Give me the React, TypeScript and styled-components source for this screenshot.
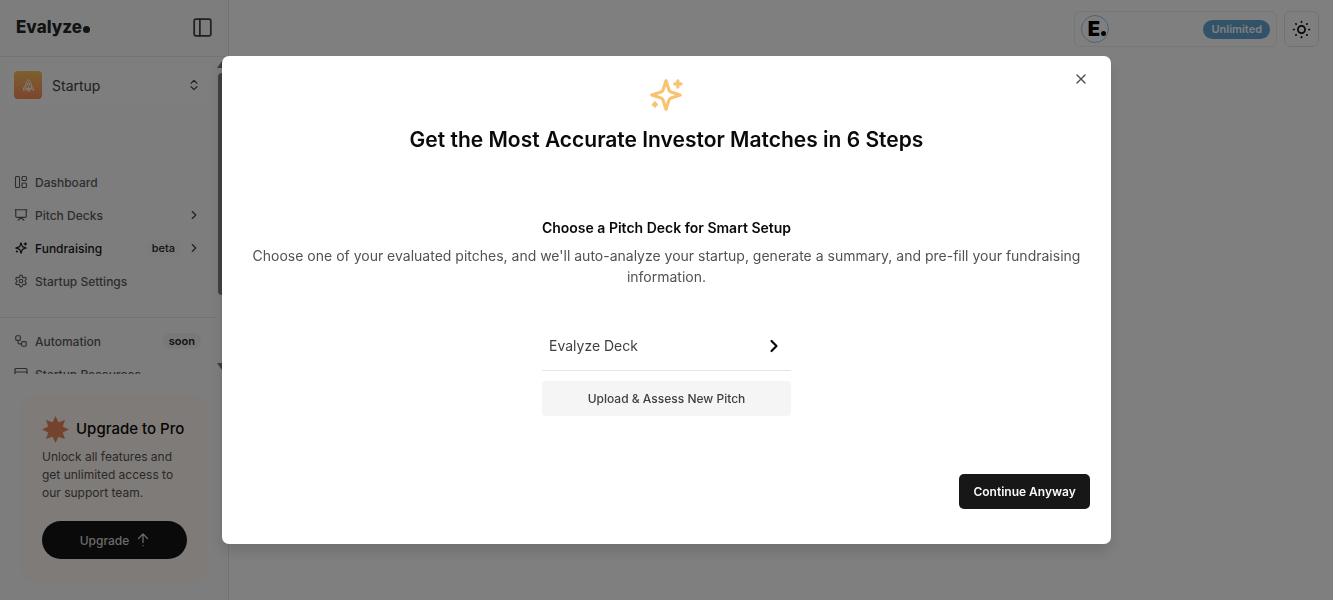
import React from "react";
import styled, { createGlobalStyle, css } from "styled-components";
import {
  ChevronRight,
  ChevronsUpDown,
  Presentation,
  Settings,
  Workflow,
  X,
} from "lucide-react";

const GlobalStyle = createGlobalStyle`
  *, *::before, *::after { box-sizing: border-box; }
  body {
    margin: 0;
    background: #ffffff;
    color: #0a0a0a;
    font-family: Inter, "Liberation Sans", sans-serif;
    font-size: 12px;
  }
  button { font: inherit; color: inherit; border: 0; background: none; padding: 0; cursor: pointer; }
  a { color: inherit; text-decoration: none; }
  h1, h2, h3, p, ul { margin: 0; padding: 0; }
  ul { list-style: none; }
  svg { flex: none; }
`;

const Shell = styled.div`
  display: flex;
  height: 100vh;
  overflow: hidden;
`;

const Sidebar = styled.aside`
  display: flex;
  flex-direction: column;
  flex: none;
  width: 229px;
  background: #fafafa;
  border-right: 1px solid #e5e5e5;
`;

const SidebarHeader = styled.header`
  display: flex;
  align-items: center;
  justify-content: space-between;
  flex: none;
  height: 57px;
  padding: 0 15px 2px 16px;
  border-bottom: 1px solid #e9e9e9;
`;

const Logo = styled.a`
  display: flex;
  align-items: baseline;
  gap: 1px;
  font-size: 17px;
  line-height: 24px;
  font-weight: 800;
  color: #262626;
`;

const LogoDot = styled.span`
  width: 7px;
  height: 7px;
  border-radius: 50%;
  background: #262626;
`;

const IconButton = styled.button`
  display: flex;
  color: #404040;
`;

const ScrollArea = styled.div`
  display: flex;
  flex: 1;
  min-height: 0;
  overflow: hidden;
`;

const ScrollContent = styled.div`
  flex: 1;
  min-width: 0;
`;

const ScrollTrack = styled.div`
  display: flex;
  flex-direction: column;
  align-items: center;
  flex: none;
  width: 12px;
  padding: 4px 0;
`;

const ScrollArrow = styled.span<{ $down?: boolean }>`
  border: 5px solid transparent;
  ${(p) =>
    p.$down
      ? css`
          border-top: 7px solid #7a7a7a;
          border-bottom: 0;
          margin-top: auto;
        `
      : css`
          border-bottom: 7px solid #7a7a7a;
          border-top: 0;
        `}
`;

const ScrollThumb = styled.span`
  width: 9px;
  height: 72%;
  margin-top: 5px;
  border-radius: 4px;
  background: #808080;
`;

const Switcher = styled.button`
  display: flex;
  align-items: center;
  gap: 10px;
  width: calc(100% - 14px);
  height: 42px;
  margin: 7px 0 60px 7px;
  padding: 0 8px 0 7px;
  border-radius: 6px;
  background: #fdfdfd;
  font-size: 14px;
  color: #404040;
  text-align: left;
  > svg { margin-left: auto; }
`;

const SwitcherIcon = styled.span`
  display: flex;
  align-items: center;
  justify-content: center;
  width: 28px;
  height: 28px;
  border-radius: 4px;
  color: #ffffff;
  background: linear-gradient(#fdc05a, #fb8a5c);
`;

const NavList = styled.ul`
  & + & {
    width: 215px;
    margin-top: 19px;
    padding-top: 7px;
    border-top: 1px solid #e5e5e5;
  }
`;

const NavLink = styled.a<{ $active?: boolean }>`
  display: flex;
  align-items: center;
  gap: 7px;
  width: 215px;
  height: 33px;
  padding: 0 14px 1px;
  font-size: 12px;
  font-weight: 500;
  color: ${(p) => (p.$active ? "#171717" : "#5c5c5c")};
  white-space: nowrap;
`;

const NavEnd = styled.span`
  display: flex;
  align-items: center;
  gap: 6px;
  margin-left: auto;
  color: #404040;
`;

const Tag = styled.span<{ $filled?: boolean }>`
  padding: 0 6px;
  border-radius: 8px;
  background: ${(p) => (p.$filled ? "#f0f0f0" : "#f7f7f7")};
  font-size: 11px;
  line-height: 16px;
  font-weight: ${(p) => (p.$filled ? 600 : 500)};
  color: #262626;
`;

const SidebarFooter = styled.div`
  flex: none;
  padding: 21px 20px 18px;
`;

const UpgradeCard = styled.section`
  padding: 22px 21px 23px 22px;
  border-radius: 14px;
  background: #fff6f0;
`;

const UpgradeTitle = styled.h2`
  display: flex;
  align-items: center;
  gap: 7px;
  margin-bottom: 7px;
  font-size: 15px;
  line-height: 24px;
  font-weight: 500;
  color: #0a0a0a;
  white-space: nowrap;
  svg { margin: -2px 0; }
`;

const UpgradeText = styled.p`
  font-size: 12px;
  line-height: 18px;
  color: #525252;
`;

const UpgradeButton = styled.button`
  display: flex;
  align-items: center;
  justify-content: center;
  gap: 8px;
  width: 100%;
  height: 38px;
  margin-top: 19px;
  border-radius: 19px;
  background: #141414;
  font-weight: 500;
  color: #d4d4d4;
`;

const Main = styled.main`
  flex: 1;
  min-width: 0;
`;

const Topbar = styled.header`
  display: flex;
  justify-content: flex-end;
  gap: 7px;
  padding: 11px 14px;
`;

const Account = styled.button`
  display: flex;
  align-items: center;
  justify-content: space-between;
  width: 203px;
  height: 36px;
  padding: 0 6px;
  border: 1px solid #ededed;
  border-radius: 6px;
`;

const Avatar = styled.span`
  display: flex;
  align-items: center;
  justify-content: center;
  width: 28px;
  height: 28px;
  border: 1px solid #9cc6e8;
  border-radius: 50%;
`;

const AvatarMark = styled.span`
  display: flex;
  align-items: baseline;
  gap: 1px;
  padding-left: 4px;
  font-size: 20px;
  line-height: 24px;
  font-weight: 900;
  color: #000000;
  &::after {
    content: "";
    width: 5px;
    height: 5px;
    border-radius: 50%;
    background: #000000;
  }
`;

const PlanBadge = styled.span`
  padding: 0 8px;
  border-radius: 10px;
  background: #62a4d0;
  font-size: 11px;
  line-height: 19px;
  font-weight: 600;
  color: #ffffff;
`;

const ThemeButton = styled.button`
  display: flex;
  align-items: center;
  justify-content: center;
  width: 35px;
  height: 36px;
  border: 1px solid #e5e5e5;
  border-radius: 6px;
`;

const Overlay = styled.div`
  position: fixed;
  inset: 0;
  display: flex;
  align-items: center;
  justify-content: center;
  background: rgba(0, 0, 0, 0.5);
`;

const Dialog = styled.section`
  position: relative;
  display: flex;
  flex-direction: column;
  align-items: center;
  width: 66.67%;
  padding: 20px 21px 35px;
  border-radius: 7px;
  background: #ffffff;
  box-shadow: 0 8px 14px rgba(0, 0, 0, 0.12);
  text-align: center;
`;

const CloseButton = styled.button`
  position: absolute;
  top: 15px;
  right: 22px;
  display: flex;
  color: #525252;
`;

const DialogTitle = styled.h1`
  margin: 12px 0 63px;
  font-size: 21px;
  line-height: 28px;
  font-weight: 600;
  color: #0a0a0a;
`;

const StepTitle = styled.h2`
  margin-bottom: 7px;
  font-size: 14px;
  line-height: 21px;
  font-weight: 600;
`;

const StepText = styled.p`
  font-size: 14px;
  line-height: 21px;
  color: #525252;
`;

const DeckPicker = styled.div`
  width: 249px;
  margin-top: 34px;
`;

const DeckOption = styled.button`
  display: flex;
  align-items: center;
  justify-content: space-between;
  width: 100%;
  height: 50px;
  padding: 0 7px;
  border-bottom: 1px solid #e5e5e5;
  font-size: 14px;
  color: #404040;
`;

const UploadButton = styled.button`
  width: 100%;
  height: 35px;
  margin-top: 10px;
  border-radius: 4px;
  background: #f5f5f5;
  font-weight: 500;
  color: #404040;
`;

const ContinueButton = styled.button`
  align-self: flex-end;
  height: 35px;
  margin-top: 58px;
  padding: 0 14px;
  border-radius: 5px;
  background: #171717;
  font-weight: 600;
  color: #fafafa;
`;

const LineIcon = ({ size, width = 2, color = "currentColor", children }: {
  size: number;
  width?: number;
  color?: string;
  children: React.ReactNode;
}) => (
  <svg
    width={size}
    height={size}
    viewBox="0 0 24 24"
    fill="none"
    stroke={color}
    strokeWidth={width}
    strokeLinecap="round"
    strokeLinejoin="round"
    aria-hidden="true"
  >
    {children}
  </svg>
);

const SparkleIcon = ({ size, color, width }: { size: number; color?: string; width?: number }) => (
  <LineIcon size={size} color={color} width={width}>
    <path d="M12 3l-1.900 5.800a2 2 0 0 1-1.300 1.300L3 12l5.800 1.900a2 2 0 0 1 1.300 1.300L12 21l1.900-5.800a2 2 0 0 1 1.300-1.300L21 12l-5.800-1.900a2 2 0 0 1-1.300-1.300Z" />
    <path d="M19.500 3v4M21.500 5h-4M5 17v2M6 18H4" />
  </LineIcon>
);

const RocketIcon = () => (
  <LineIcon size={13} width={1.8}>
    <path d="M12 1.500C8.500 4 7 7.500 7 11v7h10v-7c0-3.500-1.500-7-5-9.500Z" />
    <circle cx="12" cy="9.500" r="2" />
    <path d="M7 12l-4 4v5l4-3M17 12l4 4v5l-4-3M10 18v4h4v-4M12 14v4" />
  </LineIcon>
);

const PanelIcon = () => (
  <LineIcon size={21} width={2}>
    <rect x="2.500" y="2.500" width="19" height="19" rx="2" />
    <path d="M9 2.500v19" />
  </LineIcon>
);

const SunIcon = () => (
  <LineIcon size={19} width={2.2}>
    <circle cx="12" cy="12" r="4.500" />
    <path d="M12 2v.6M12 21.400v.6M2 12h.6M21.400 12h.6M4.900 4.900l.4.4M18.700 18.700l.4.4M4.900 19.100l.4-.4M18.700 5.300l.4-.4" />
  </LineIcon>
);

const Starburst = () => (
  <svg width="27" height="27" viewBox="-50 -50 100 100" fill="#e8875c" aria-hidden="true">
    <path d="M0-50 11-27 35-35 27-11 50 0 27 11 35 35 11 27 0 50-11 27-35 35-27 11-50 0-27-11-35-35-11-27Z" />
  </svg>
);

const DottedArrowUp = () => (
  <svg width="12" height="14" viewBox="0 0 12 14" fill="none" stroke="currentColor" strokeWidth="1.3" strokeLinecap="round" strokeLinejoin="round" aria-hidden="true">
    <path d="M1.500 5.500 6 1l4.500 4.500M6 1v8.500M6 12.600v.1" />
  </svg>
);

const LayoutIcon = () => (
  <svg width="14" height="14" viewBox="0 0 14 14" fill="none" stroke="currentColor" strokeWidth="1.100" aria-hidden="true">
    <rect x="1.500" y="1.500" width="4" height="11" rx="1" />
    <rect x="8" y="1.500" width="4.500" height="4" rx="1" />
    <rect x="8" y="8" width="4.500" height="4.500" rx="1" />
  </svg>
);

const WindowIcon = () => (
  <svg width="14" height="14" viewBox="0 0 14 14" fill="none" stroke="currentColor" strokeWidth="1.200" aria-hidden="true">
    <path d="M1 13V2.500a1 1 0 0 1 1-1h10a1 1 0 0 1 1 1V13M1 5h12" />
  </svg>
);

export default function App() {
  return (
    <>
      <GlobalStyle />
      <Shell>
        <Sidebar>
          <SidebarHeader>
            <Logo href="#" aria-label="Evalyze">
              Evalyze
              <LogoDot />
            </Logo>
            <IconButton aria-label="Toggle sidebar">
              <PanelIcon />
            </IconButton>
          </SidebarHeader>
          <ScrollArea>
            <ScrollContent>
              <Switcher>
                <SwitcherIcon>
                  <RocketIcon />
                </SwitcherIcon>
                Startup
                <ChevronsUpDown size={14} />
              </Switcher>
              <nav>
                <NavList>
                  <li>
                    <NavLink href="#"><LayoutIcon />Dashboard</NavLink>
                  </li>
                  <li>
                    <NavLink href="#">
                      <Presentation size={14} />
                      Pitch Decks
                      <NavEnd><ChevronRight size={14} /></NavEnd>
                    </NavLink>
                  </li>
                  <li>
                    <NavLink href="#" $active>
                      <SparkleIcon size={14} />
                      Fundraising
                      <NavEnd><Tag>beta</Tag><ChevronRight size={14} /></NavEnd>
                    </NavLink>
                  </li>
                  <li>
                    <NavLink href="#">
                      <Settings size={14} />
                      Startup Settings
                    </NavLink>
                  </li>
                </NavList>
                <NavList>
                  <li>
                    <NavLink href="#">
                      <Workflow size={14} />
                      Automation
                      <NavEnd><Tag $filled>soon</Tag></NavEnd>
                    </NavLink>
                  </li>
                  <li>
                    <NavLink href="#"><WindowIcon />Startup Resources</NavLink>
                  </li>
                </NavList>
              </nav>
            </ScrollContent>
            <ScrollTrack aria-hidden="true">
              <ScrollArrow />
              <ScrollThumb />
              <ScrollArrow $down />
            </ScrollTrack>
          </ScrollArea>
          <SidebarFooter>
            <UpgradeCard>
              <UpgradeTitle><Starburst />Upgrade to Pro</UpgradeTitle>
              <UpgradeText>Unlock all features and get unlimited access to our support team.</UpgradeText>
              <UpgradeButton>Upgrade<DottedArrowUp /></UpgradeButton>
            </UpgradeCard>
          </SidebarFooter>
        </Sidebar>
        <Main>
          <Topbar>
            <Account aria-label="Account">
              <Avatar><AvatarMark>E</AvatarMark></Avatar>
              <PlanBadge>Unlimited</PlanBadge>
            </Account>
            <ThemeButton aria-label="Change theme">
              <SunIcon />
            </ThemeButton>
          </Topbar>
        </Main>
      </Shell>
      <Overlay>
        <Dialog role="dialog" aria-modal="true" aria-labelledby="dialog-title">
          <CloseButton aria-label="Close"><X size={16} /></CloseButton>
          <SparkleIcon size={38} color="#f8c471" />
          <DialogTitle id="dialog-title">Get the Most Accurate Investor Matches in 6 Steps</DialogTitle>
          <StepTitle>Choose a Pitch Deck for Smart Setup</StepTitle>
          <StepText>
            Choose one of your evaluated pitches, and we'll auto-analyze your startup, generate a summary, and pre-fill your fundraising information.
          </StepText>
          <DeckPicker>
            <DeckOption>
              Evalyze Deck
              <ChevronRight size={20} strokeWidth={2.6} color="#0a0a0a" />
            </DeckOption>
            <UploadButton>Upload &amp; Assess New Pitch</UploadButton>
          </DeckPicker>
          <ContinueButton>Continue Anyway</ContinueButton>
        </Dialog>
      </Overlay>
    </>
  );
}
